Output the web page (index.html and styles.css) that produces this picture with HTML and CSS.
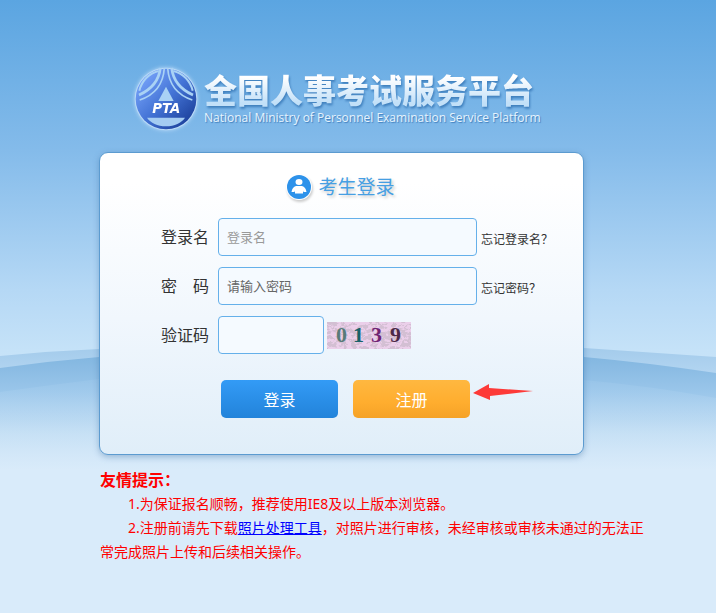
FILE: index.html
```
<!DOCTYPE html>
<html lang="zh-CN">
<head>
    <meta charset="UTF-8">
    <meta name="viewport" content="width=device-width, initial-scale=1.0">
    <title>全国人事考试服务平台</title>
    <link rel="stylesheet" href="styles.css">
</head>
<body>
    <svg class="hills" viewBox="0 0 716 130" preserveAspectRatio="none" aria-hidden="true">
        <defs>
            <linearGradient id="hillBack" x1="0" y1="0" x2="0" y2="1">
                <stop offset="0" stop-color="#a0c9ea"/>
                <stop offset="0.25" stop-color="#b3d5f1"/>
                <stop offset="1" stop-color="#d9ebfa"/>
            </linearGradient>
            <linearGradient id="hillFront" x1="0" y1="0" x2="0" y2="1">
                <stop offset="0.05" stop-color="#82b6e0"/>
                <stop offset="0.35" stop-color="#9ac6ea"/>
                <stop offset="0.7" stop-color="#c2def4"/>
                <stop offset="1" stop-color="#d9ebfa"/>
            </linearGradient>
            <linearGradient id="hillLight" x1="0" y1="0" x2="0" y2="1">
                <stop offset="0" stop-color="#b4d8f4" stop-opacity="0.1"/>
                <stop offset="0.5" stop-color="#c6e0f5" stop-opacity="0.3"/>
                <stop offset="1" stop-color="#d9ebfa"/>
            </linearGradient>
        </defs>
        <path d="M0 16Q50 11 99 9Q340 -5 584 8L716 17V130H0Z" fill="url(#hillBack)"/>
        <path d="M0 28Q50 21 99 17Q340 2 584 17Q650 23 716 33V130H0Z" fill="url(#hillFront)"/>
        <path d="M0 52Q50 45 99 39Q340 18 584 40Q650 46 716 58V130H0Z" fill="url(#hillLight)"/>
    </svg>

    <div class="page">
        <header class="header">
            <svg class="logo" viewBox="26 32 198 198" aria-hidden="true">
                <defs>
                    <linearGradient id="logoBlue" x1="0" y1="0" x2="1" y2="1">
                        <stop offset="0.1" stop-color="#78a4fa"/>
                        <stop offset="0.5" stop-color="#4474d6"/>
                        <stop offset="0.9" stop-color="#1b3f9a"/>
                    </linearGradient>
                </defs>
                <circle cx="125" cy="131" r="94" fill="#c5e0fa" opacity="0.7"/>
                <circle cx="125" cy="131" r="91" fill="url(#logoBlue)"/>
                <g fill="none" stroke="#a9d2f5" stroke-width="6">
                    <path d="M103 47C74 54 52 76 45 106M147 47C176 54 198 76 205 106"/>
                    <path d="M108 38C104 74 84 101 44 119M142 38C146 74 166 101 206 119" stroke-width="8"/>
                    <path d="M120 38C117 82 94 118 46 134M130 38C133 82 156 118 204 134" stroke-width="5"/>
                </g>
                <path d="M125 94L148 137H102Z" fill="#a9d2f5"/>
                <path d="M68 187H182C171 203 151 213 125 213C99 213 79 203 68 187Z" fill="#a4ccf2"/>
                <text class="logo-text" x="126" y="172" text-anchor="middle">PTA</text>
            </svg>
            <div class="brand">
                <h1>全国人事考试服务平台</h1>
                <p>National Ministry of Personnel Examination Service Platform</p>
            </div>
        </header>

        <main class="card">
            <h2>
                <svg class="user-icon" viewBox="0 0 26 26" aria-hidden="true">
                    <circle cx="13" cy="13" r="13" fill="#fff"/>
                    <circle cx="13" cy="13" r="12" fill="#2d92ea"/>
                    <ellipse cx="13" cy="8" rx="3.500" ry="3" fill="#fff"/>
                    <path d="M10 12H16C18.500 12.500 20 15 20.500 18H17.500L17 16.500V19.500H9V16.500L8.500 18H5.500C6 15 7.500 12.500 10 12Z" fill="#fff"/>
                </svg>
                考生登录
            </h2>
            <form>
                <div class="row">
                    <label for="username">登录名</label>
                    <input type="text" id="username" placeholder="登录名">
                    <a href="#">忘记登录名？</a>
                </div>
                <div class="row">
                    <label for="password">密　码</label>
                    <input type="password" id="password" placeholder="请输入密码">
                    <a href="#">忘记密码？</a>
                </div>
                <div class="row">
                    <label for="code">验证码</label>
                    <input type="text" id="code" class="short">
                    <svg class="captcha" viewBox="0 0 84 27" role="img" aria-label="0139">
                        <defs>
                            <filter id="noise" x="0" y="0" width="100%" height="100%">
                                <feTurbulence type="fractalNoise" baseFrequency="0.2 0.28" numOctaves="3" seed="8"/>
                                <feColorMatrix values="0 0 0 0 0.55  0 0 0 0 0.46  0 0 0 0 0.55  12 0 0 0 -5.500"/>
                            </filter>
                        </defs>
                        <rect width="84" height="27" fill="#ebcfea"/>
                        <rect width="84" height="27" filter="url(#noise)" opacity="0.6"/>
                        <path d="M2 8l9 4M5 20l10-5M20 3l8 6M29 22l9-8M44 4l7 5M46 23l8-4M63 5l6 7M70 24l9-9M75 5l7 6M18 23l6-5" stroke="#e9cde8" fill="none"/>
                        <g class="captcha-text">
                            <text x="9" y="20" fill="#587b78">0</text>
                            <text x="26" y="20" fill="#19626a">1</text>
                            <text x="44" y="20" fill="#702574">3</text>
                            <text x="63" y="20" fill="#4b2947">9</text>
                        </g>
                    </svg>
                </div>
                <div class="actions">
                    <button type="submit" class="btn-login">登录</button>
                    <button type="button" class="btn-register">注册</button>
                    <svg class="arrow" viewBox="0 0 60 18" aria-hidden="true">
                        <path d="M0 9L16 0V4L60 7L17 12V16Z" fill="#fd3a38"/>
                    </svg>
                </div>
            </form>
        </main>

        <section class="tips">
            <h3>友情提示：</h3>
            <p>1.为保证报名顺畅，推荐使用IE8及以上版本浏览器。</p>
            <p>2.注册前请先下载<a href="#">照片处理工具</a>，对照片进行审核，未经审核或审核未通过的无法正常完成照片上传和后续相关操作。</p>
        </section>
    </div>
</body>
</html>
```

FILE: styles.css
```
* {
    box-sizing: border-box;
}
html {
    min-height: 100%;
    background: #d9ebfa;
}
body {
    position: relative;
    margin: 0;
    font-family: "Noto Sans", "Noto Sans CJK SC", sans-serif;
    background: linear-gradient(#5ba5e1 0, #84bbea 150px, #b5d8f5 290px, #c5e2f8 350px, #d9ebfa 470px);
}
h1, h2, h3, p {
    margin: 0;
}
.hills {
    position: absolute;
    top: 340px;
    left: 0;
    width: 100%;
    height: 130px;
}
.page {
    position: relative;
    padding: 66px 70px 48px 99px;
}

/* header */
.header {
    display: flex;
    gap: 5px;
    height: 86px;
    padding-left: 34px;
}
.logo {
    flex: none;
    width: 66px;
    height: 66px;
    filter: drop-shadow(0 0 2px #c5e0fa);
}
.logo-text {
    font: italic bold 40px "DejaVu Sans", sans-serif;
    fill: #fff;
}
.brand {
    white-space: nowrap;
}
.brand h1 {
    font-family: "Noto Sans CJK SC", sans-serif;
    font-size: 33px;
    font-weight: 900;
    line-height: 46px;
    color: transparent;
    background: linear-gradient(#fff 25%, #c2e0f8 80%);
    -webkit-background-clip: text;
    background-clip: text;
    filter: drop-shadow(1px 2px 1px #3f7fbd);
}
.brand p {
    font-family: "Open Sans", sans-serif;
    font-size: 12px;
    line-height: 12px;
    color: #e6f3fd;
    text-shadow: 1px 1px 1px #3f7fbd;
}

/* login box */
.card {
    max-width: 485px;
    padding: 20px 30px 36px 61px;
    border: 1px solid #5c9bd0;
    border-radius: 9px;
    background: linear-gradient(#fff 10%, #f1f7fd 55%, #e0eef9);
    box-shadow: 0 2px 6px rgba(60, 110, 160, 0.4);
}
.card h2 {
    display: flex;
    align-items: center;
    justify-content: center;
    gap: 6px;
    margin: 0 0 17px -33px;
    font-size: 19px;
    font-weight: 400;
    line-height: 28px;
    color: #469fe3;
    text-shadow: 2px 2px 3px #ccc;
}
.user-icon {
    width: 26px;
    height: 26px;
    filter: drop-shadow(1px 2px 1px #ccc);
}
.row {
    display: flex;
    align-items: center;
    height: 38px;
    margin-bottom: 11px;
}
.row label {
    width: 57px;
    font-size: 16px;
    line-height: 24px;
    color: #333;
}
.row input {
    width: 259px;
    height: 38px;
    padding: 0 8px;
    border: 1px solid #65b0ea;
    border-radius: 4px;
    background: #f5faff;
    font-family: inherit;
    font-size: 13px;
    outline: none;
}
.row input.short {
    width: 106px;
}
.row input::placeholder {
    color: #999;
}
.row input[type="password"]::placeholder {
    color: #666;
}
.row a {
    padding-top: 6px;
    margin-left: 4px;
    font-size: 12px;
    line-height: 18px;
    color: #333;
    text-decoration: none;
    white-space: nowrap;
}
.captcha {
    width: 84px;
    height: 27px;
    margin-left: 3px;
}
.captcha-text {
    font: bold 22px "Liberation Serif", serif;
}
.actions {
    display: flex;
    align-items: center;
    margin: 26px 0 0 60px;
}
.actions button {
    width: 117px;
    height: 38px;
    padding: 0;
    border: 0;
    border-radius: 5px;
    font-family: inherit;
    font-size: 16px;
    color: #fff;
    cursor: pointer;
}
.btn-login {
    margin-right: 15px;
    background: linear-gradient(#339bf6, #2283da);
}
.btn-register {
    background: linear-gradient(#ffb840, #ffad2e 60%, #f5a227);
}
.arrow {
    width: 60px;
    height: 18px;
    margin: 0 0 12px 3px;
}

/* tips */
.tips {
    padding: 13px 0 0 1px;
    font-size: 14px;
    line-height: 24px;
    color: #f00;
}
.tips h3 {
    font-size: 16px;
}
.tips p {
    text-indent: 28px;
}
.tips a {
    color: #00f;
}
```
